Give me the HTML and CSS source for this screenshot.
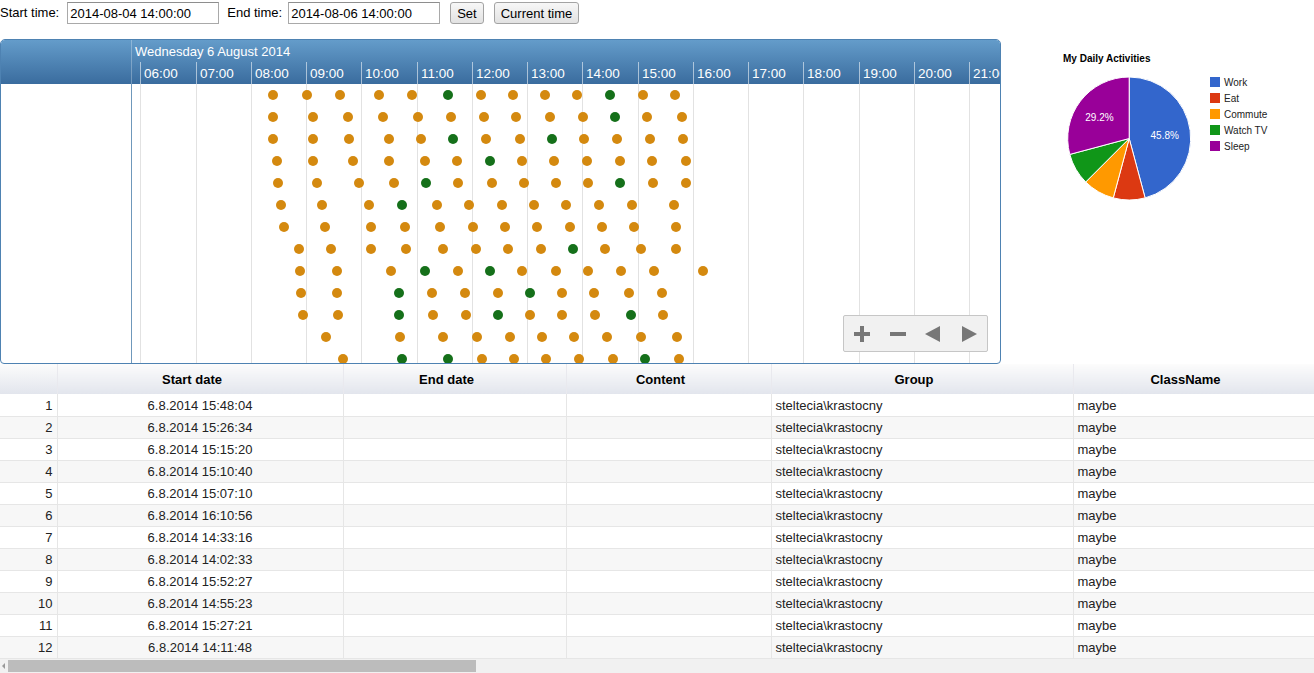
FILE: index.html
```html
<!DOCTYPE html>
<html>
<head>
<meta charset="utf-8">
<title>Timeline</title>
<link rel="stylesheet" href="styles.css">
</head>
<body>
<div class="controls">
  <label class="lbl">Start time:</label>
  <input class="in" type="text" value="2014-08-04 14:00:00">
  <label class="lbl lbl-end">End time:</label>
  <input class="in in-end" type="text" value="2014-08-06 14:00:00">
  <button class="btn">Set</button>
  <button class="btn">Current time</button>
</div>

<div class="main">
  <div class="timeline">
    <div class="tl-head">
      <div class="grp"></div>
      <div class="axis">
        <div class="date">Wednesday 6 August 2014</div>
        <div class="hour" style="left:8px">06:00</div>
        <div class="hour" style="left:64px">07:00</div>
        <div class="hour" style="left:119px">08:00</div>
        <div class="hour" style="left:174px">09:00</div>
        <div class="hour" style="left:229px">10:00</div>
        <div class="hour" style="left:285px">11:00</div>
        <div class="hour" style="left:340px">12:00</div>
        <div class="hour" style="left:395px">13:00</div>
        <div class="hour" style="left:450px">14:00</div>
        <div class="hour" style="left:506px">15:00</div>
        <div class="hour" style="left:561px">16:00</div>
        <div class="hour" style="left:616px">17:00</div>
        <div class="hour" style="left:671px">18:00</div>
        <div class="hour" style="left:727px">19:00</div>
        <div class="hour" style="left:782px">20:00</div>
        <div class="hour" style="left:837px">21:00</div>
      </div>
    </div>
    <div class="tl-body">
      <div class="grp"></div>
      <div class="canvas">
        <i class="gl" style="left:8px"></i><i class="gl" style="left:64px"></i><i class="gl" style="left:119px"></i><i class="gl" style="left:174px"></i><i class="gl" style="left:229px"></i><i class="gl" style="left:285px"></i><i class="gl" style="left:340px"></i><i class="gl" style="left:395px"></i><i class="gl" style="left:450px"></i><i class="gl" style="left:506px"></i><i class="gl" style="left:561px"></i><i class="gl" style="left:616px"></i><i class="gl" style="left:671px"></i><i class="gl" style="left:727px"></i><i class="gl" style="left:782px"></i><i class="gl" style="left:837px"></i>

        <div class="lane" style="top:6px"><b style="left:136px"></b><b style="left:170px"></b><b style="left:203px"></b><b style="left:242px"></b><b style="left:275px"></b><b class="g" style="left:311px"></b><b style="left:344px"></b><b style="left:376px"></b><b style="left:408px"></b><b style="left:440px"></b><b class="g" style="left:473px"></b><b style="left:506px"></b><b style="left:538px"></b></div>
        <div class="lane" style="top:28px"><b style="left:136px"></b><b style="left:176px"></b><b style="left:211px"></b><b style="left:246px"></b><b style="left:281px"></b><b style="left:314px"></b><b style="left:347px"></b><b style="left:379px"></b><b style="left:413px"></b><b style="left:446px"></b><b class="g" style="left:478px"></b><b style="left:510px"></b><b style="left:545px"></b></div>
        <div class="lane" style="top:50px"><b style="left:136px"></b><b style="left:176px"></b><b style="left:212px"></b><b style="left:252px"></b><b style="left:284px"></b><b class="g" style="left:316px"></b><b style="left:349px"></b><b style="left:383px"></b><b class="g" style="left:415px"></b><b style="left:447px"></b><b style="left:480px"></b><b style="left:513px"></b><b style="left:546px"></b></div>
        <div class="lane" style="top:72px"><b style="left:140px"></b><b style="left:176px"></b><b style="left:216px"></b><b style="left:252px"></b><b style="left:288px"></b><b style="left:320px"></b><b class="g" style="left:353px"></b><b style="left:385px"></b><b style="left:417px"></b><b style="left:450px"></b><b style="left:483px"></b><b style="left:515px"></b><b style="left:549px"></b></div>
        <div class="lane" style="top:94px"><b style="left:141px"></b><b style="left:180px"></b><b style="left:222px"></b><b style="left:257px"></b><b class="g" style="left:289px"></b><b style="left:321px"></b><b style="left:355px"></b><b style="left:387px"></b><b style="left:419px"></b><b style="left:451px"></b><b class="g" style="left:483px"></b><b style="left:516px"></b><b style="left:549px"></b></div>
        <div class="lane" style="top:116px"><b style="left:144px"></b><b style="left:185px"></b><b style="left:232px"></b><b class="g" style="left:265px"></b><b style="left:300px"></b><b style="left:332px"></b><b style="left:365px"></b><b style="left:397px"></b><b style="left:429px"></b><b style="left:462px"></b><b style="left:495px"></b><b style="left:537px"></b></div>
        <div class="lane" style="top:138px"><b style="left:147px"></b><b style="left:188px"></b><b style="left:234px"></b><b style="left:268px"></b><b style="left:303px"></b><b style="left:336px"></b><b style="left:368px"></b><b style="left:400px"></b><b style="left:433px"></b><b style="left:465px"></b><b style="left:497px"></b><b style="left:539px"></b></div>
        <div class="lane" style="top:160px"><b style="left:162px"></b><b style="left:194px"></b><b style="left:234px"></b><b style="left:269px"></b><b style="left:306px"></b><b style="left:339px"></b><b style="left:371px"></b><b style="left:404px"></b><b class="g" style="left:436px"></b><b style="left:468px"></b><b style="left:504px"></b><b style="left:539px"></b></div>
        <div class="lane" style="top:182px"><b style="left:163px"></b><b style="left:200px"></b><b style="left:254px"></b><b class="g" style="left:288px"></b><b style="left:321px"></b><b class="g" style="left:353px"></b><b style="left:385px"></b><b style="left:419px"></b><b style="left:451px"></b><b style="left:484px"></b><b style="left:517px"></b><b style="left:566px"></b></div>
        <div class="lane" style="top:204px"><b style="left:164px"></b><b style="left:200px"></b><b class="g" style="left:262px"></b><b style="left:295px"></b><b style="left:328px"></b><b style="left:361px"></b><b class="g" style="left:393px"></b><b style="left:425px"></b><b style="left:457px"></b><b style="left:492px"></b><b style="left:525px"></b></div>
        <div class="lane" style="top:226px"><b style="left:166px"></b><b style="left:201px"></b><b class="g" style="left:262px"></b><b style="left:296px"></b><b style="left:329px"></b><b class="g" style="left:361px"></b><b style="left:393px"></b><b style="left:425px"></b><b style="left:458px"></b><b class="g" style="left:494px"></b><b style="left:526px"></b></div>
        <div class="lane" style="top:248px"><b style="left:189px"></b><b style="left:263px"></b><b style="left:306px"></b><b style="left:340px"></b><b style="left:373px"></b><b style="left:405px"></b><b style="left:437px"></b><b style="left:470px"></b><b style="left:504px"></b><b style="left:540px"></b></div>
        <div class="lane" style="top:270px"><b style="left:206px"></b><b class="g" style="left:265px"></b><b class="g" style="left:311px"></b><b style="left:345px"></b><b style="left:377px"></b><b style="left:409px"></b><b style="left:442px"></b><b style="left:476px"></b><b class="g" style="left:508px"></b><b style="left:542px"></b></div>
      </div>
    </div>
    <div class="nav">
      <span class="nav-btn"><svg width="16" height="16" viewBox="0 0 16 16"><path d="M6 0h4v6h6v4h-6v6h-4v-6h-6v-4h6z"/></svg></span>
      <span class="nav-btn"><svg width="16" height="16" viewBox="0 0 16 16"><path d="M0 6h16v4h-16z"/></svg></span>
      <span class="nav-btn"><svg width="16" height="16" viewBox="0 0 16 16"><path d="M0 8l15-8v16z"/></svg></span>
      <span class="nav-btn"><svg width="16" height="16" viewBox="0 0 16 16"><path d="M16 8l-15-8v16z"/></svg></span>
    </div>
  </div>

  <div class="chart">
    <svg width="274" height="200" viewBox="0 0 274 200">
      <text class="c-title" x="23" y="21.5">My Daily Activities</text>
      <g class="pie">
        <path fill="#3366cc" d="M89.2,98.5 L89.2,37 A61.5,61.5 0 0 1 105.12,157.9 Z"/>
        <path fill="#dc3912" d="M89.2,98.5 L105.12,157.9 A61.5,61.5 0 0 1 73.28,157.9 Z"/>
        <path fill="#ff9900" d="M89.2,98.5 L73.28,157.9 A61.5,61.5 0 0 1 45.71,141.99 Z"/>
        <path fill="#109618" d="M89.2,98.5 L45.71,141.99 A61.5,61.5 0 0 1 29.8,114.42 Z"/>
        <path fill="#990099" d="M89.2,98.5 L29.8,114.42 A61.5,61.5 0 0 1 89.2,37 Z"/>
      </g>
      <text class="c-pct" x="124.7" y="98.5">45.8%</text>
      <text class="c-pct" x="59.5" y="80.8">29.2%</text>
      <rect x="170" y="37" width="10" height="10" fill="#3366cc"/>
      <text class="c-leg" x="184" y="46">Work</text>
      <rect x="170" y="53" width="10" height="10" fill="#dc3912"/>
      <text class="c-leg" x="184" y="62">Eat</text>
      <rect x="170" y="69" width="10" height="10" fill="#ff9900"/>
      <text class="c-leg" x="184" y="78">Commute</text>
      <rect x="170" y="85" width="10" height="10" fill="#109618"/>
      <text class="c-leg" x="184" y="94">Watch TV</text>
      <rect x="170" y="101" width="10" height="10" fill="#990099"/>
      <text class="c-leg" x="184" y="110">Sleep</text>
    </svg>
  </div>
</div>

<table class="grid">
  <colgroup>
    <col class="w-num"><col class="w-start"><col class="w-end"><col class="w-content"><col class="w-group"><col class="w-class">
  </colgroup>
  <thead>
    <tr><th></th><th>Start date</th><th>End date</th><th>Content</th><th>Group</th><th>ClassName</th></tr>
  </thead>
  <tbody>
    <tr><td class="num">1</td><td class="ctr">6.8.2014 15:48:04</td><td></td><td></td><td>steltecia\krastocny</td><td>maybe</td></tr>
    <tr><td class="num">2</td><td class="ctr">6.8.2014 15:26:34</td><td></td><td></td><td>steltecia\krastocny</td><td>maybe</td></tr>
    <tr><td class="num">3</td><td class="ctr">6.8.2014 15:15:20</td><td></td><td></td><td>steltecia\krastocny</td><td>maybe</td></tr>
    <tr><td class="num">4</td><td class="ctr">6.8.2014 15:10:40</td><td></td><td></td><td>steltecia\krastocny</td><td>maybe</td></tr>
    <tr><td class="num">5</td><td class="ctr">6.8.2014 15:07:10</td><td></td><td></td><td>steltecia\krastocny</td><td>maybe</td></tr>
    <tr><td class="num">6</td><td class="ctr">6.8.2014 16:10:56</td><td></td><td></td><td>steltecia\krastocny</td><td>maybe</td></tr>
    <tr><td class="num">7</td><td class="ctr">6.8.2014 14:33:16</td><td></td><td></td><td>steltecia\krastocny</td><td>maybe</td></tr>
    <tr><td class="num">8</td><td class="ctr">6.8.2014 14:02:33</td><td></td><td></td><td>steltecia\krastocny</td><td>maybe</td></tr>
    <tr><td class="num">9</td><td class="ctr">6.8.2014 15:52:27</td><td></td><td></td><td>steltecia\krastocny</td><td>maybe</td></tr>
    <tr><td class="num">10</td><td class="ctr">6.8.2014 14:55:23</td><td></td><td></td><td>steltecia\krastocny</td><td>maybe</td></tr>
    <tr><td class="num">11</td><td class="ctr">6.8.2014 15:27:21</td><td></td><td></td><td>steltecia\krastocny</td><td>maybe</td></tr>
    <tr><td class="num">12</td><td class="ctr">6.8.2014 14:11:48</td><td></td><td></td><td>steltecia\krastocny</td><td>maybe</td></tr>
  </tbody>
</table>
<div class="hscroll"><span class="arrow"></span><span class="thumb"></span></div>
</body>
</html>
```

FILE: styles.css
```css
* { box-sizing: border-box; }
html, body { margin: 0; padding: 0; overflow: hidden; }
body {
  width: 1314px;
  height: 673px;
  background: #fff;
  color: #000;
  font-family: "Liberation Sans", Arial, sans-serif;
  font-size: 13px;
}

/* top controls */
.controls {
  height: 39px;
  padding-top: 2px;
  display: flex;
  align-items: flex-start;
}
.lbl { line-height: 22px; margin-right: 8px; }
.lbl-end { margin-right: 6px; }
.in {
  width: 152px;
  height: 22px;
  margin: 0 8px 0 0;
  padding: 0 2px;
  border: 1px solid #a9a9a9;
  border-top-color: #8e8e8e;
  font: 13px "Liberation Sans", Arial, sans-serif;
  color: #000;
  background: #fff;
}
.in-end { margin-right: 10px; }
.btn {
  height: 22px;
  margin: 0 10px 0 0;
  padding: 0 6px;
  border: 1px solid #a3a3a3;
  border-radius: 3px;
  background: linear-gradient(#f7f7f7, #e2e2e2);
  font: 13px "Liberation Sans", Arial, sans-serif;
  color: #000;
}

/* main row */
.main { display: flex; align-items: flex-start; }

/* timeline */
.timeline {
  flex: none;
  position: relative;
  width: 1001px;
  height: 325px;
  border: 1px solid #4e82b2;
  border-radius: 5px 5px 4px 4px;
  overflow: hidden;
  background: #fff;
}
.tl-head {
  display: flex;
  height: 44px;
  background: linear-gradient(#649cca, #3a6c9e);
  color: #fff;
}
.tl-head .grp {
  width: 131px;
  flex: none;
  border-right: 1px solid rgba(255,255,255,0.28);
}
.axis { position: relative; flex: 1; overflow: hidden; }
.date {
  position: absolute;
  left: 3px;
  top: 5px;
  line-height: 14px;
  white-space: nowrap;
}
.hour {
  position: absolute;
  top: 22px;
  height: 22px;
  padding: 1px 0 0 3px;
  line-height: 21px;
  font-size: 13.5px;
  border-left: 1px solid rgba(255,255,255,0.55);
  white-space: nowrap;
}
.tl-body { display: flex; height: 279px; }
.tl-body .grp {
  width: 131px;
  flex: none;
  border-right: 1px solid #6f98bb;
}
.canvas { position: relative; flex: 1; overflow: hidden; }
.gl {
  position: absolute;
  top: 0;
  bottom: 0;
  width: 1px;
  background: #e2e2e2;
}
.lane { position: absolute; left: 0; right: 0; height: 10px; }
.lane b {
  position: absolute;
  top: 0;
  width: 10px;
  height: 10px;
  border-radius: 50%;
  background: #d4890f;
}
.lane b.g { background: #15701a; }

.nav {
  position: absolute;
  left: 842px;
  top: 275px;
  width: 145px;
  height: 37px;
  display: flex;
  background: #f1f1f1;
  border: 1px solid #c6c6c6;
  border-radius: 2px;
}
.nav-btn {
  width: 36px;
  display: flex;
  align-items: center;
  justify-content: center;
}
.nav-btn svg { fill: #777; display: block; }

/* chart */
.chart { margin: 1px 0 0 39px; }
.chart svg { display: block; }
.pie path { stroke: #fff; stroke-width: 1; }
.c-title { font: bold 10px "Liberation Sans", Arial, sans-serif; fill: #000; }
.c-pct { font: 10px "Liberation Sans", Arial, sans-serif; fill: #fff; text-anchor: middle; }
.c-leg { font: 10px "Liberation Sans", Arial, sans-serif; fill: #222; }

/* table */
.grid {
  width: 1314px;
  border-collapse: collapse;
  table-layout: fixed;
}
.w-num { width: 57px; }
.w-start { width: 286px; }
.w-end { width: 223px; }
.w-content { width: 205px; }
.w-group { width: 302px; }
.w-class { width: 241px; }
.grid th {
  height: 30px;
  padding: 0 18px 0 2px;
  font-weight: bold;
  text-align: center;
  background: linear-gradient(#fcfcfc, #e2e5ed);
  border-left: 1px solid #e9e9ee;
  border-right: 1px solid #e9e9ee;
  white-space: nowrap;
}
.grid th:first-child { border-left: none; }
.grid td {
  height: 22px;
  padding: 1px 4px 0;
  border: 1px solid #e6e6e6;
  border-top: none;
  white-space: nowrap;
  overflow: hidden;
  color: #222;
}
.grid td:first-child { border-left: none; }
.grid tbody tr:nth-child(even) td { background: #f7f7f7; }
.num { text-align: right; }
.ctr { text-align: center; }

.hscroll {
  height: 15px;
  background: #f1f1f1;
  display: flex;
  align-items: center;
  padding-left: 2px;
}
.arrow {
  width: 0;
  height: 0;
  border-top: 3px solid transparent;
  border-bottom: 3px solid transparent;
  border-right: 3px solid #9a9a9a;
}
.thumb {
  margin-left: 3px;
  width: 468px;
  height: 12px;
  background: #bcbcbc;
}
```
